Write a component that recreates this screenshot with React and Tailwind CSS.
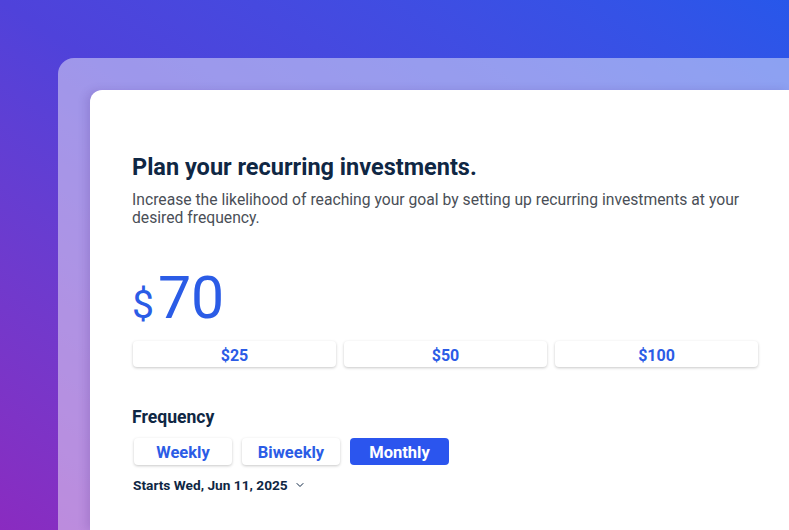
import { ChevronDown } from "lucide-react";

const amounts = ["$25", "$50", "$100"];
const freqs = ["Weekly", "Biweekly", "Monthly"];

export default function App() {
  return (
    <div
      className="w-[789px] h-[530px] overflow-hidden bg-linear-to-tr from-[#8a2bc0] via-[#4f42da] to-[#2757ea] pl-[58px] pt-[58px]"
      style={{ fontFamily: "Roboto, 'Noto Sans', sans-serif" }}
    >
      <div className="h-[472px] rounded-tl-2xl bg-white/45 pl-8 pt-8">
        <div className="h-full rounded-tl-xl bg-white pl-[42px] pr-[31px] pt-[63px] shadow-[-4px_0_8px_rgba(60,30,120,0.15)]">
          <h1 className="text-[23.5px] leading-[28px] font-bold text-[#0f2744]">
            Plan your recurring investments.
          </h1>
          <p className="mt-[10px] text-[15.7px] leading-[18px] text-[#4a4f57]">
            Increase the likelihood of reaching your goal by setting up recurring investments at your desired frequency.
          </p>

          <div className="mt-[38px] flex items-baseline text-[#2b5ce6]">
            <span className="text-[39px] leading-none mr-[4px]">$</span>
            <span className="text-[59px] leading-[66px]">70</span>
          </div>

          <div className="mt-[10px] grid grid-cols-3 gap-2 pl-px">
            {amounts.map((a) => (
              <button
                key={a}
                className="h-[26px] rounded bg-white pt-[3px] text-[16px] leading-[20px] font-bold text-[#2b5ce6] shadow-[0_1px_3px_rgba(0,0,0,0.22)]"
              >
                {a}
              </button>
            ))}
          </div>

          <h2 className="mt-[39px] text-[17.6px] leading-[22px] font-bold text-[#0f2744]">Frequency</h2>
          <div className="mt-[10px] flex gap-[10px] pl-[2px]">
            {freqs.map((f) => (
              <button
                key={f}
                className={
                  f === "Monthly"
                    ? "h-[27px] w-[99px] rounded bg-[#2b55ee] pt-[3px] text-[16.5px] leading-[20px] font-bold text-white"
                    : "h-[27px] w-[98px] rounded bg-white pt-[3px] text-[16.5px] leading-[20px] font-bold text-[#2b5ce6] shadow-[0_1px_3px_rgba(0,0,0,0.22)]"
                }
              >
                {f}
              </button>
            ))}
          </div>

          <div className="mt-[10px] flex items-center gap-[6px] pl-px text-[13.7px] font-bold text-[#0f2744]">
            Starts Wed, Jun 11, 2025
            <ChevronDown size={12} strokeWidth={2} />
          </div>
        </div>
      </div>
    </div>
  );
}
